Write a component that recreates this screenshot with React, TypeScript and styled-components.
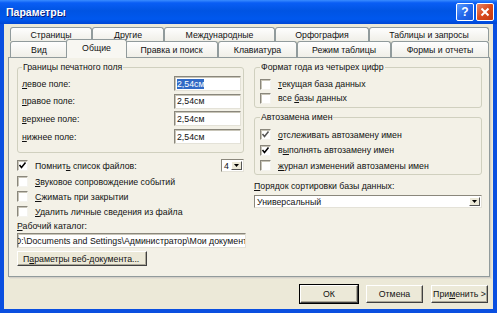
import React from "react";
import styled, { createGlobalStyle, css } from "styled-components";

const GlobalStyle = createGlobalStyle`
  html, body {
    margin: 0;
    padding: 0;
    background: #ffffff;
  }
  body {
    font-family: "Liberation Sans", Arial, sans-serif;
    font-size: 8.75px;
    color: #111;
  }
`;

const Window = styled.div`
  width: 497px;
  height: 313px;
  display: flex;
  flex-direction: column;
  overflow: hidden;
  background: #0a4fe0;
`;

const TitleBar = styled.div`
  height: 24px;
  flex: none;
  display: flex;
  align-items: center;
  padding: 0 3px 0 6px;
  background: linear-gradient(
    to bottom,
    #3a8cff 0%,
    #0a5ef5 12%,
    #0054e3 45%,
    #0058ee 80%,
    #0046d4 100%
  );
`;

const Title = styled.div`
  flex: 1;
  color: #fff;
  font-weight: bold;
  font-size: 10.5px;
  text-shadow: 1px 1px 0 #0a1c7a;
`;

const CaptionButton = styled.div<{ $close?: boolean }>`
  width: 16px;
  height: 16px;
  margin-left: 2px;
  border: 1px solid #fff;
  border-radius: 2px;
  display: flex;
  align-items: center;
  justify-content: center;
  color: #fff;
  font-weight: bold;
  font-size: 12px;
  background: ${(p) =>
    p.$close
      ? "linear-gradient(135deg, #e8876a 0%, #d9491c 50%, #c23a12 100%)"
      : "linear-gradient(135deg, #5c9dff 0%, #2469ec 50%, #1654d8 100%)"};
`;

const Body = styled.div`
  flex: 1;
  margin: 0 4px 4px 4px;
  background: #ece9d8;
  padding: 3px 0 0 4px;
  display: flex;
  flex-direction: column;
`;

const TabRow = styled.div<{ $h: number }>`
  display: flex;
  height: ${(p) => p.$h}px;
  margin-left: 2px;
  align-items: flex-end;
`;

const Tab = styled.div<{ $w: number; $active?: boolean }>`
  width: ${(p) => p.$w}px;
  height: 100%;
  box-sizing: border-box;
  flex: none;
  border: 1px solid #919b9c;
  border-bottom: none;
  border-radius: 3px 3px 0 0;
  background: linear-gradient(to bottom, #fefefe, #f0efe8);
  display: flex;
  align-items: center;
  justify-content: center;
  white-space: nowrap;
  overflow: hidden;
  ${(p) =>
    p.$active &&
    css`
      width: ${p.$w + 4}px;
      height: calc(100% + 3px);
      margin: 0 -2px -1px -2px;
      position: relative;
      z-index: 2;
      background: #f8f7f2;
      padding-bottom: 2px;
    `}
`;

const Panel = styled.div`
  width: 482px;
  height: 220px;
  box-sizing: border-box;
  border: 1px solid #919b9c;
  background: #f3f1e7;
  box-shadow: 1px 1px 0 #d4d0c8, 2px 2px 0 #e3e0d3;
  display: grid;
  grid-template-columns: 229px 228px;
  column-gap: 8px;
  padding: 4px 0 0 8px;
  position: relative;
  z-index: 1;
`;

const Column = styled.div`
  display: flex;
  flex-direction: column;
`;

const Group = styled.fieldset<{ $h: number; $w: number; $pad?: number }>`
  margin: 0;
  padding: ${(p) => p.$pad ?? 4}px 0 0 ${(p) => (p.$pad ?? 4) > 3 ? 5 : 4}px;
  width: ${(p) => p.$w}px;
  height: ${(p) => p.$h}px;
  box-sizing: border-box;
  border: 1px solid #d0d0bf;
  border-radius: 3px;
  display: flex;
  flex-direction: column;
`;

const Legend = styled.legend`
  padding: 0 1px;
  margin-left: 0;
  line-height: 11px;
`;

const FieldRow = styled.div`
  display: flex;
  align-items: center;
  justify-content: space-between;
  height: 17.6px;
  padding-right: 2px;
`;

const TextBox = styled.div<{ $w: number }>`
  width: ${(p) => p.$w}px;
  height: 15px;
  box-sizing: border-box;
  background: #fff;
  border-top: 1px solid #8a877c;
  border-left: 1px solid #8a877c;
  border-right: 1px solid #e4e2d8;
  border-bottom: 1px solid #e4e2d8;
  box-shadow: inset 1px 1px 0 #c8c5b8;
  display: flex;
  align-items: center;
  padding-left: 2px;
  white-space: nowrap;
  overflow: hidden;
`;

const Selected = styled.span`
  background: #316ac5;
  color: #fff;
`;

const CheckRow = styled.div<{ $h?: number }>`
  display: flex;
  align-items: center;
  height: ${(p) => p.$h ?? 15}px;
  white-space: nowrap;
`;

const Box = styled.span`
  width: 11px;
  height: 11px;
  box-sizing: border-box;
  flex: none;
  margin-right: 7px;
  background: #fff;
  border-top: 1px solid #8a877c;
  border-left: 1px solid #8a877c;
  border-right: 1px solid #f4f3ee;
  border-bottom: 1px solid #f4f3ee;
  box-shadow: inset 1px 1px 0 #c8c5b8;
  display: flex;
  align-items: center;
  justify-content: center;
`;

const Check = ({ on, soft }: { on?: boolean; soft?: boolean }) => (
  <Box>
    {on && (
      <svg width="9" height="9" viewBox="0 0 9 9">
        <path
          d="M1.5 4 L3.5 6.5 L7.5 1.5"
          fill="none"
          stroke={soft ? "#555" : "#000"}
          strokeWidth="1.5"
        />
      </svg>
    )}
  </Box>
);

const Label = styled.div<{ $h?: number }>`
  height: ${(p) => p.$h ?? 15}px;
  display: flex;
  align-items: center;
  white-space: nowrap;
`;

const DropButton = styled.span`
  width: 11px;
  height: 100%;
  box-sizing: border-box;
  flex: none;
  margin-left: auto;
  background: #ece9d8;
  border-top: 1px solid #fff;
  border-left: 1px solid #fff;
  border-right: 1px solid #555;
  border-bottom: 1px solid #555;
  display: flex;
  align-items: center;
  justify-content: center;
`;

const Arrow = () => (
  <svg width="5" height="3" viewBox="0 0 5 3">
    <path d="M0 0 H5 L2.5 3 Z" fill="#000" />
  </svg>
);

const Combo = styled.div<{ $w: number; $h: number }>`
  width: ${(p) => p.$w}px;
  height: ${(p) => p.$h}px;
  box-sizing: border-box;
  background: #fff;
  border-top: 1px solid #8a877c;
  border-left: 1px solid #8a877c;
  border-right: 1px solid #e4e2d8;
  border-bottom: 1px solid #e4e2d8;
  display: flex;
  align-items: center;
  padding: 1px 1px 1px 2px;
  white-space: nowrap;
`;

const PathBox = styled(TextBox)`
  padding-left: 0;
  text-indent: -3px;
`;

const Button = styled.div<{ $w: number; $default?: boolean }>`
  width: ${(p) => p.$w}px;
  height: 18px;
  box-sizing: border-box;
  background: #ece9d8;
  border-top: 1px solid #fff;
  border-left: 1px solid #fff;
  border-right: 1px solid #404040;
  border-bottom: 1px solid #404040;
  box-shadow: inset -1px -1px 0 #aca899;
  display: flex;
  align-items: center;
  justify-content: center;
  white-space: nowrap;
  ${(p) =>
    p.$default &&
    css`
      outline: 1px solid #000;
      outline-offset: 0;
    `}
`;

const WebButton = styled(Button)`
  margin-top: 3px;
  height: 15px;
  justify-content: flex-start;
  padding-left: 5px;
`;

const ButtonBar = styled.div`
  display: flex;
  justify-content: flex-end;
  gap: 8px;
  padding: 8px 5px 0 0;
`;

const topTabs = [
  { t: "Страницы", w: 82 },
  { t: "Другие", w: 72 },
  { t: "Международные", w: 111 },
  { t: "Орфография", w: 94 },
  { t: "Таблицы и запросы", w: 120 },
];

const bottomTabs = [
  { t: "Вид", w: 58 },
  { t: "Общие", w: 57, active: true },
  { t: "Правка и поиск", w: 93 },
  { t: "Клавиатура", w: 79 },
  { t: "Режим таблицы", w: 94 },
  { t: "Формы и отчеты", w: 98 },
];

export default function App() {
  return (
    <>
      <GlobalStyle />
      <Window>
        <TitleBar>
          <Title>Параметры</Title>
          <CaptionButton>?</CaptionButton>
          <CaptionButton $close>
            <svg width="10" height="10" viewBox="0 0 10 10">
              <path d="M1.5 1.5 L8.5 8.5 M8.5 1.5 L1.5 8.5" stroke="#fff" strokeWidth="2" />
            </svg>
          </CaptionButton>
        </TitleBar>
        <Body>
          <TabRow $h={14}>
            {topTabs.map((tab) => (
              <Tab key={tab.t} $w={tab.w}>
                {tab.t}
              </Tab>
            ))}
          </TabRow>
          <TabRow $h={16}>
            {bottomTabs.map((tab) => (
              <Tab key={tab.t} $w={tab.w} $active={tab.active}>
                {tab.t}
              </Tab>
            ))}
          </TabRow>
          <Panel>
            <Column>
              <Group $w={227} $h={91} $pad={2}>
                <Legend>Границы печатного поля</Legend>
                <FieldRow>
                  <span><u>л</u>евое поле:</span>
                  <TextBox $w={67}>
                    <Selected>2,54см</Selected>
                  </TextBox>
                </FieldRow>
                <FieldRow>
                  <span><u>п</u>равое поле:</span>
                  <TextBox $w={67}>2,54см</TextBox>
                </FieldRow>
                <FieldRow>
                  <span><u>в</u>ерхнее поле:</span>
                  <TextBox $w={67}>2,54см</TextBox>
                </FieldRow>
                <FieldRow>
                  <span><u>н</u>ижнее поле:</span>
                  <TextBox $w={67}>2,54см</TextBox>
                </FieldRow>
              </Group>
              <CheckRow $h={17} style={{ marginTop: 4, width: 227 }}>
                <Check on />
                <span>Помнит<u>ь</u> список файлов:</span>
                <Combo $w={23} $h={13} style={{ marginLeft: "auto" }}>
                  4
                  <DropButton>
                    <Arrow />
                  </DropButton>
                </Combo>
              </CheckRow>
              <CheckRow>
                <Check />
                <span><u>З</u>вуковое сопровождение событий</span>
              </CheckRow>
              <CheckRow>
                <Check />
                <span><u>С</u>жимать при закрытии</span>
              </CheckRow>
              <CheckRow>
                <Check />
                <span><u>У</u>далить личные сведения из файла</span>
              </CheckRow>
              <Label $h={14}>
                <span><u>Р</u>абочий каталог:</span>
              </Label>
              <PathBox $w={229}>
                D:\Documents and Settings\Администратор\Мои документы
              </PathBox>
              <WebButton $w={130}>
                <span>П<u>а</u>раметры веб-документа...</span>
              </WebButton>
            </Column>
            <Column>
              <Group $w={228} $h={46} $pad={4}>
                <Legend>Формат года из четырех цифр</Legend>
                <CheckRow $h={14}>
                  <Check />
                  <span><u>т</u>екущая база данных</span>
                </CheckRow>
                <CheckRow $h={14}>
                  <Check />
                  <span>все <u>б</u>азы данных</span>
                </CheckRow>
              </Group>
              <Group $w={228} $h={63} $pad={4} style={{ marginTop: 4 }}>
                <Legend>Автозамена имен</Legend>
                <CheckRow $h={15.5}>
                  <Check on soft />
                  <span><u>о</u>тслеживать автозамену имен</span>
                </CheckRow>
                <CheckRow $h={15.5}>
                  <Check on />
                  <span>в<u>ы</u>полнять автозамену имен</span>
                </CheckRow>
                <CheckRow $h={15.5}>
                  <Check />
                  <span><u>ж</u>урнал изменений автозамены имен</span>
                </CheckRow>
              </Group>
              <Label $h={16} style={{ marginTop: 3 }}>
                <span><u>П</u>орядок сортировки базы данных:</span>
              </Label>
              <Combo $w={228} $h={13} style={{ marginTop: 1 }}>
                Универсальный
                <DropButton>
                  <Arrow />
                </DropButton>
              </Combo>
            </Column>
          </Panel>
          <ButtonBar>
            <Button $w={58} $default>
              ОК
            </Button>
            <Button $w={57}>Отмена</Button>
            <Button $w={57}>
              <span>При<u>м</u>енить &gt;</span>
            </Button>
          </ButtonBar>
        </Body>
      </Window>
    </>
  );
}
